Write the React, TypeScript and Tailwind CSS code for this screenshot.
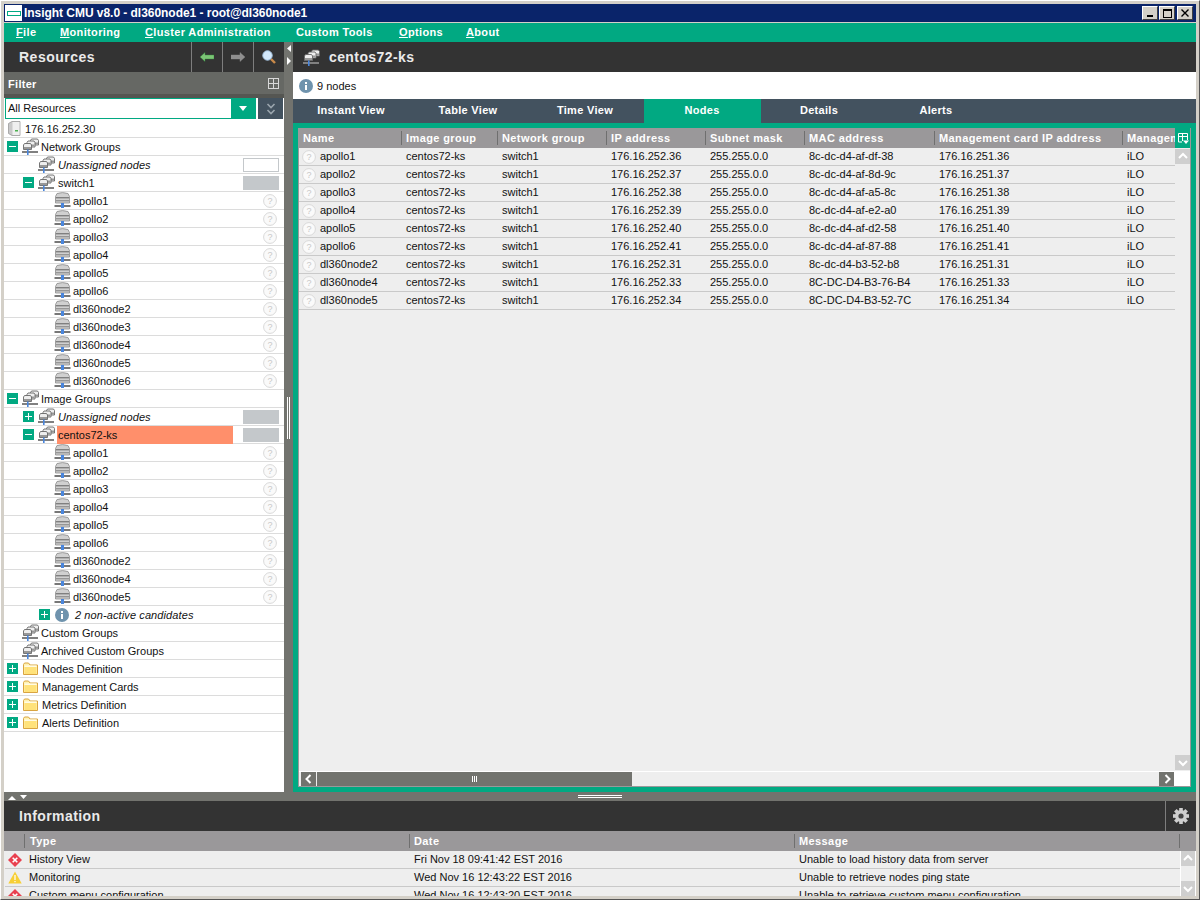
import React from "react";

const font = "font-['Liberation_Sans',Arial,sans-serif]";

function Stack({ x, y }: { x: number; y: number }) {
  return (
    <g transform={`translate(${x} ${y})`}>
      <path d="M1.5 0.5 H7.5 L8.5 2 V6.5 H0.5 V2 Z" fill="#eeeeee" stroke="#666" strokeWidth="0.9" />
      <rect x="1" y="4" width="7" height="2" fill="#989898" />
    </g>
  );
}

function NetIcon() {
  return (
    <svg width="17" height="17" viewBox="0 0 17 17" className="shrink-0">
      <Stack x={8} y={0.5} />
      <Stack x={4.5} y={2.5} />
      <Stack x={1} y={5} />
      <rect x="0" y="13" width="16" height="2" fill="#808080" />
      <rect x="5" y="11.5" width="1.6" height="5.5" fill="#4a86dc" />
    </svg>
  );
}

function NodeIcon() {
  return (
    <svg width="17" height="17" viewBox="0 0 17 17" className="shrink-0">
      <path d="M3 1.5 Q8.5 -0.3 14 1.5 L15.5 4.5 V11 H1.5 V4.5 Z" fill="#d0d0d0" stroke="#8a8a8a" strokeWidth="0.8" />
      <rect x="2" y="5" width="13" height="1.4" fill="#808080" />
      <rect x="2" y="8" width="13" height="1.4" fill="#969696" />
      <rect x="0.5" y="13" width="16" height="2" fill="#777" />
      <rect x="7" y="11" width="3" height="5" fill="#4a86dc" />
    </svg>
  );
}

function Help({ className = "" }: { className?: string }) {
  return (
    <svg width="14" height="14" viewBox="0 0 14 14" className={"shrink-0 " + className}>
      <circle cx="7" cy="7" r="6.4" fill="#fafafa" stroke="#d9d9d9" strokeWidth="1" />
      <text x="7" y="10.2" textAnchor="middle" fontSize="9" fill="#c8c8c8" fontFamily="Liberation Sans">?</text>
    </svg>
  );
}

function InfoDot() {
  return (
    <svg width="14" height="14" viewBox="0 0 14 14" className="shrink-0">
      <circle cx="7" cy="7" r="7" fill="#6f93ad" />
      <rect x="6" y="3" width="2" height="2" fill="#fff" />
      <rect x="6" y="6" width="2" height="5" fill="#fff" />
    </svg>
  );
}

function Expander({ open }: { open: boolean }) {
  return (
    <span className="relative block h-[11px] w-[11px] shrink-0 bg-[#01a982]">
      <span className="absolute left-[2px] top-[5px] h-px w-[7px] bg-white" />
      {!open && <span className="absolute left-[5px] top-[2px] h-[7px] w-px bg-white" />}
    </span>
  );
}

function Folder() {
  return (
    <svg width="15" height="13" viewBox="0 0 15 13" className="shrink-0">
      <path d="M0.5 2.5 V12.5 H14.5 V3 H7 L5.5 1 H1.5 Z" fill="#fff2b0" stroke="#d9a441" strokeWidth="1" />
      <rect x="1.5" y="5" width="12" height="7" fill="#ffe27a" />
      <rect x="1.5" y="3.5" width="12" height="1.5" fill="#fffbe6" />
    </svg>
  );
}

type Tree = {
  label: string;
  level: 0 | 1 | 2;
  exp?: "open" | "closed";
  icon: "net" | "node" | "folder" | "info";
  italic?: boolean;
  swatch?: "white" | "gray";
  help?: boolean;
  selected?: boolean;
};

const n = (label: string): Tree => ({ label, level: 2, icon: "node", help: true });

const tree: Tree[] = [
  { label: "Network Groups", level: 0, exp: "open", icon: "net" },
  { label: "Unassigned nodes", level: 1, icon: "net", italic: true, swatch: "white" },
  { label: "switch1", level: 1, exp: "open", icon: "net", swatch: "gray" },
  ...["apollo1", "apollo2", "apollo3", "apollo4", "apollo5", "apollo6", "dl360node2", "dl360node3", "dl360node4", "dl360node5", "dl360node6"].map(n),
  { label: "Image Groups", level: 0, exp: "open", icon: "net" },
  { label: "Unassigned nodes", level: 1, exp: "closed", icon: "net", italic: true, swatch: "gray" },
  { label: "centos72-ks", level: 1, exp: "open", icon: "net", swatch: "gray", selected: true },
  ...["apollo1", "apollo2", "apollo3", "apollo4", "apollo5", "apollo6", "dl360node2", "dl360node4", "dl360node5"].map(n),
  { label: "2 non-active candidates", level: 2, exp: "closed", icon: "info", italic: true },
  { label: "Custom Groups", level: 0, icon: "net" },
  { label: "Archived Custom Groups", level: 0, icon: "net" },
  { label: "Nodes Definition", level: 0, exp: "closed", icon: "folder" },
  { label: "Management Cards", level: 0, exp: "closed", icon: "folder" },
  { label: "Metrics Definition", level: 0, exp: "closed", icon: "folder" },
  { label: "Alerts Definition", level: 0, exp: "closed", icon: "folder" },
];

function TreeRow({ r }: { r: Tree }) {
  const slot =
    r.level === 0 ? "w-[18px] pl-[3px]" : r.level === 1 ? "w-[34px] pl-[19px]" : r.icon === "info" ? "w-[50px] pl-[35px]" : "w-[50px]";
  return (
    <div className="flex h-[18px] shrink-0 items-center border-b border-[#dcdcdc] text-[11px] text-[#111]">
      <span className={"flex shrink-0 items-center " + slot}>{r.exp && <Expander open={r.exp === "open"} />}</span>
      {r.icon === "net" && <NetIcon />}
      {r.icon === "node" && <NodeIcon />}
      {r.icon === "folder" && <span className="mr-[2px] ml-[1px] block"><Folder /></span>}
      {r.icon === "info" && <span className="mr-[4px] ml-[1px] block"><InfoDot /></span>}
      <span
        className={
          "ml-[2px] flex h-[18px] items-center pt-[2px] whitespace-nowrap " +
          (r.level === 1 ? "pl-px " : "") +
          (r.selected ? "w-[176px] bg-[#ff8f6b] " : "") +
          (r.italic ? "italic tracking-[0.1px]" : "")
        }
      >
        {r.label}
      </span>
      <span className="flex-1" />
      {r.swatch === "white" && <span className="mr-[5px] h-[14px] w-[36px] shrink-0 border border-[#c4c8cb] bg-white" />}
      {r.swatch === "gray" && <span className="mr-[5px] h-[14px] w-[36px] shrink-0 bg-[#c4c8cb]" />}
      {r.help && <Help className="mr-[7px]" />}
    </div>
  );
}

const cols = ["Name", "Image group", "Network group", "IP address", "Subnet mask", "MAC address", "Management card IP address", "Management"];
const rows = [
  ["apollo1", "176.16.252.36", "8c-dc-d4-af-df-38", "176.16.251.36"],
  ["apollo2", "176.16.252.37", "8c-dc-d4-af-8d-9c", "176.16.251.37"],
  ["apollo3", "176.16.252.38", "8c-dc-d4-af-a5-8c", "176.16.251.38"],
  ["apollo4", "176.16.252.39", "8c-dc-d4-af-e2-a0", "176.16.251.39"],
  ["apollo5", "176.16.252.40", "8c-dc-d4-af-d2-58", "176.16.251.40"],
  ["apollo6", "176.16.252.41", "8c-dc-d4-af-87-88", "176.16.251.41"],
  ["dl360node2", "176.16.252.31", "8c-dc-d4-b3-52-b8", "176.16.251.31"],
  ["dl360node4", "176.16.252.33", "8C-DC-D4-B3-76-B4", "176.16.251.33"],
  ["dl360node5", "176.16.252.34", "8C-DC-D4-B3-52-7C", "176.16.251.34"],
];
const gridCols = "grid grid-cols-[103px_96px_109px_99px_99px_130px_188px_53px]";

function Chevron({ dir, color = "#fff" }: { dir: "up" | "down" | "left" | "right"; color?: string }) {
  const d = {
    up: "M2 7 L6 3 L10 7",
    down: "M2 4 L6 8 L10 4",
    left: "M7.5 2 L3.5 6 L7.5 10",
    right: "M4.5 2 L8.5 6 L4.5 10",
  }[dir];
  return (
    <svg width="12" height="12" viewBox="0 0 12 12">
      <path d={d} fill="none" stroke={color} strokeWidth="2" />
    </svg>
  );
}

const menu: [string, string][] = [
  ["F", "ile"],
  ["M", "onitoring"],
  ["C", "luster Administration"],
  ["", "Custom Tools"],
  ["O", "ptions"],
  ["A", "bout"],
];

function WinBtn({ children }: { children: React.ReactNode }) {
  return (
    <span className="flex h-[14px] w-[16px] items-center justify-center border-t border-l border-t-white border-l-white border-r border-b border-r-[#404040] border-b-[#404040] bg-[#d4d0c8]">
      {children}
    </span>
  );
}

function Separator() {
  return <span className="h-[30px] w-px shrink-0 bg-[#7e7e7e]" />;
}

function Arrow({ color, dark }: { color: string; dark: string }) {
  return (
    <svg width="14" height="10" viewBox="0 0 14 10">
      <path d="M0 5 L5 0.5 V3 H14 V7 H5 V9.5 Z" fill={color} stroke={dark} strokeWidth="0.4" />
    </svg>
  );
}

const logs = [
  ["err", "History View", "Fri Nov 18 09:41:42 EST 2016", "Unable to load history data from server"],
  ["warn", "Monitoring", "Wed Nov 16 12:43:22 EST 2016", "Unable to retrieve nodes ping state"],
  ["err", "Custom menu configuration", "Wed Nov 16 12:43:20 EST 2016", "Unable to retrieve custom menu configuration"],
];

function ErrIcon() {
  return (
    <svg width="14" height="14" viewBox="0 0 14 14">
      <path d="M7 0 L14 7 L7 14 L0 7 Z" fill="#e9404f" />
      <path d="M4.7 4.7 L9.3 9.3 M9.3 4.7 L4.7 9.3" stroke="#fff" strokeWidth="1.6" />
    </svg>
  );
}

function WarnIcon() {
  return (
    <svg width="14" height="13" viewBox="0 0 14 13">
      <path d="M7 0.5 L13.7 12.5 H0.3 Z" fill="#f7cf35" />
      <rect x="6.4" y="4" width="1.2" height="5" fill="#fff" />
      <rect x="6.4" y="10" width="1.2" height="1.2" fill="#fff" />
    </svg>
  );
}

export default function App() {
  return (
    <div className={"flex h-[900px] w-[1200px] flex-col overflow-hidden border-t border-r border-b border-l border-t-white border-l-white border-r-[#555] border-b-[#555] bg-[#d4d0c8] pt-[3px] pr-[3px] pb-[3px] pl-[3px] " + font}>
      {/* title */}
      <div className="flex h-[18px] shrink-0 items-center bg-[#0a246a] pl-[1px] text-[12px] font-bold tracking-[-0.04px] text-white">
        <span className="mr-[2px] flex h-[16px] w-[17px] items-center justify-center bg-white">
          <span className="block h-[5px] w-[14px] border border-[#01a982]" />
        </span>
        <span>Insight CMU v8.0 - dl360node1 - root@dl360node1</span>
        <span className="flex-1" />
        <span className="mr-[3px] flex items-center">
          <WinBtn><span className="mt-[6px] h-[2px] w-[6px] bg-black" /></WinBtn>
          <span className="w-px" />
          <WinBtn><span className="h-[9px] w-[9px] border border-t-2 border-black" /></WinBtn>
          <span className="w-[2px]" />
          <WinBtn>
            <svg width="8" height="8" viewBox="0 0 8 8"><path d="M0.5 0.5 L7.5 7.5 M7.5 0.5 L0.5 7.5" stroke="#000" strokeWidth="1.4" /></svg>
          </WinBtn>
        </span>
      </div>
      {/* menu */}
      <div className="mt-px flex h-[19px] shrink-0 items-center bg-[#01a982] pl-[12px] text-[11px] font-bold tracking-[0.35px] text-white">
        {menu.map(([u, t], i) => (
          <span key={t} className={["w-[44px]", "w-[85px]", "w-[151px]", "w-[103px]", "w-[67px]", "w-[40px]"][i] + " whitespace-nowrap"}>
            {u && <span className="underline">{u}</span>}
            {t}
          </span>
        ))}
      </div>

      {/* main */}
      <div className="flex h-[750px] shrink-0">
        {/* left */}
        <div className="flex w-[280px] shrink-0 flex-col bg-white">
          <div className="flex h-[30px] shrink-0 items-center bg-[#333333]">
            <span className="w-[187px] pl-[15px] text-[14px] font-bold tracking-[0.5px] text-[#eaeaea]">Resources</span>
            <Separator />
            <span className="flex w-[30px] items-center justify-center"><Arrow color="#7cc576" dark="#2f8a3a" /></span>
            <Separator />
            <span className="flex w-[30px] -scale-x-100 items-center justify-center"><Arrow color="#8f8f8f" dark="#8f8f8f" /></span>
            <Separator />
            <span className="flex flex-1 items-center justify-center">
              <svg width="14" height="14" viewBox="0 0 14 14">
                <path d="M9 9 L13 13" stroke="#c98a4a" strokeWidth="2.4" />
                <circle cx="5.5" cy="5.5" r="4.7" fill="#d3e8fb" stroke="#a9c8e6" strokeWidth="1" />
              </svg>
            </span>
          </div>
          <div className="flex h-[22px] shrink-0 items-center justify-between bg-[#666864] pt-px pr-[5px] pl-[4px] text-[11px] font-bold tracking-[0.3px] text-white">
            <span className="pt-px">Filter</span>
            <span className="relative block h-[11px] w-[11px] border border-[#d8d8d8]">
              <span className="absolute top-[4px] left-0 h-px w-[9px] bg-[#d8d8d8]" />
              <span className="absolute top-0 left-[4px] h-[9px] w-px bg-[#d8d8d8]" />
            </span>
          </div>
          <div className="h-[4px] shrink-0 bg-[#555652]" />
          <div className="flex h-[22px] shrink-0 items-stretch pr-[1px] pb-px pl-px">
            <div className="flex w-[251px] items-stretch border border-[#01a982] bg-white text-[11px] text-[#111]">
              <span className="flex flex-1 items-center pl-[2px]">All Resources</span>
              <span className="flex w-[24px] items-center justify-center bg-[#01a982]">
                <svg width="8" height="5" viewBox="0 0 8 5"><path d="M0 0 H8 L4 5 Z" fill="#fff" /></svg>
              </span>
            </div>
            <span className="ml-[2px] flex w-[25px] items-center justify-center bg-[#43525f]">
              <svg width="10" height="12" viewBox="0 0 10 12">
                <path d="M1.5 1 L5 4.5 L8.5 1 M1.5 7 L5 10.5 L8.5 7" fill="none" stroke="#9aa5ad" strokeWidth="1.6" />
              </svg>
            </span>
          </div>
          <div className="flex h-[18px] shrink-0 items-center border-b border-[#dcdcdc] pl-[4px] text-[11px] text-[#111]">
            <svg width="13" height="15" viewBox="0 0 13 15" className="mr-[4px] shrink-0">
              <path d="M0.5 2.5 L4 0.5 H12 V14.5 H4 L0.5 12.5 Z" fill="#c9c9c9" stroke="#9a9a9a" strokeWidth="0.8" />
              <rect x="4.5" y="1" width="7" height="13" fill="#efefef" />
              <rect x="7" y="9" width="3" height="1.5" fill="#4caf50" />
            </svg>
            <span className="pt-[2px]">176.16.252.30</span>
          </div>
          {tree.map((r, i) => (
            <TreeRow key={i} r={r} />
          ))}
        </div>

        {/* splitter */}
        <div className="flex w-[9px] shrink-0 flex-col items-center bg-[#72736e]">
          <svg width="6" height="20" viewBox="0 0 6 20" className="mt-[3px]">
            <path d="M5 0 V7 L1 3.5 Z M1 12 V20 L5 16 Z" fill="#fff" />
          </svg>
          <span className="mt-[332px] h-[42px] w-[3px] border-x border-white" />
        </div>

        {/* right */}
        <div className="flex min-w-0 flex-1 flex-col">
          <div className="flex h-[30px] shrink-0 items-center bg-[#333333] pl-[10px] text-[14px] font-bold tracking-[0.4px] text-[#eaeaea]">
            <NetIcon />
            <span className="ml-[9px]">centos72-ks</span>
          </div>
          <div className="flex h-[27px] shrink-0 items-center bg-white pl-[6px] text-[11px] text-[#111]">
            <InfoDot />
            <span className="ml-[4px] pt-[2px]">9 nodes</span>
          </div>
          <div className="flex h-[24px] shrink-0 bg-[#43525f] text-[11px] font-bold tracking-[0.3px] text-white">
            {["Instant View", "Table View", "Time View", "Nodes", "Details", "Alerts"].map((t) => (
              <span key={t} className={"flex w-[117px] items-center justify-center pr-px pb-[2px] " + (t === "Nodes" ? "bg-[#01a982]" : "")}>
                {t}
              </span>
            ))}
          </div>
          <div className="flex min-h-0 flex-1 bg-[#01a982] pt-[5px] pr-[5px] pb-[5px] pl-[5px]">
            <div className="flex min-w-0 flex-1 flex-col border-r border-b border-l border-[#9a989a] bg-[#eeeeee]">
              {/* header */}
              <div className="relative h-[20px] shrink-0 overflow-hidden bg-[#9a989a] text-[11px] font-bold tracking-[0.4px] text-white">
                <div className={gridCols + " h-full w-max"}>
                  {cols.map((c, i) => (
                    <span key={c} className="flex items-center overflow-hidden pl-[4px] whitespace-nowrap">
                      <span className="flex-1">{c}</span>
                      {i < 7 && <span className="h-[14px] w-px shrink-0 bg-[#6f6f6f]" />}
                    </span>
                  ))}
                </div>
                <span className="absolute top-0 right-0 flex h-[20px] w-[15px] items-center justify-center bg-[#01a982]">
                  <svg width="12" height="13" viewBox="0 0 12 13">
                    <path d="M1.5 1.5 H10.5 V8 M1.5 1.5 V10 H5 M1.5 4.5 H10.5 M5.5 1.5 V9" fill="none" stroke="#fff" strokeWidth="1" />
                    <path d="M6 8.5 H12 L9 12 Z" fill="#fff" />
                  </svg>
                </span>
              </div>
              {/* body */}
              <div className="flex min-h-0 flex-1">
                <div className="flex min-w-0 flex-1 flex-col overflow-hidden">
                  {rows.map((r) => (
                    <div key={r[0]} className={gridCols + " h-[18px] w-max shrink-0 border-b border-[#c9c9c9] text-[11px] leading-[17px] text-[#111]"}>
                      <span className="flex items-center pl-[3px]">
                        <Help />
                        <span className="ml-[4px]">{r[0]}</span>
                      </span>
                      <span className="pl-[4px]">centos72-ks</span>
                      <span className="pl-[4px]">switch1</span>
                      <span className="pl-[4px]">{r[1]}</span>
                      <span className="pl-[4px]">255.255.0.0</span>
                      <span className="pl-[4px]">{r[2]}</span>
                      <span className="pl-[4px]">{r[3]}</span>
                      <span className="pl-[4px]">iLO</span>
                    </div>
                  ))}
                </div>
                <div className="flex w-[15px] shrink-0 flex-col justify-between py-px">
                  <span className="flex h-[15px] items-center justify-center bg-[#cfcfcf]"><Chevron dir="up" /></span>
                  <span className="flex h-[15px] items-center justify-center bg-[#cfcfcf]"><Chevron dir="down" /></span>
                </div>
              </div>
              {/* h scroll */}
              <div className="flex h-[15px] shrink-0 items-stretch border-t border-white bg-[#eeeeee]">
                <span className="ml-[2px] flex w-[15px] items-center justify-center bg-[#72736e]"><Chevron dir="left" /></span>
                <span className="ml-px flex w-[315px] items-center justify-center gap-px bg-[#72736e]">
                  <span className="h-[6px] w-px bg-white" />
                  <span className="h-[6px] w-px bg-white" />
                  <span className="h-[6px] w-px bg-white" />
                </span>
                <span className="flex-1" />
                <span className="flex w-[15px] items-center justify-center bg-[#72736e]"><Chevron dir="right" /></span>
                <span className="w-[16px] bg-white" />
              </div>
            </div>
          </div>
        </div>
      </div>

      {/* divider */}
      <div className="flex h-[9px] shrink-0 items-center bg-[#72736e] pl-[3px]">
        <svg width="24" height="6" viewBox="0 0 24 6">
          <path d="M1 6 L5 2 L9 6 Z M13 1 H20 L16.5 5 Z" fill="#fff" />
        </svg>
        <span className="ml-[547px] h-[3px] w-[44px] border-y border-white" />
      </div>

      {/* information */}
      <div className="flex h-[30px] shrink-0 items-center bg-[#333333]">
        <span className="flex-1 pl-[15px] text-[14px] font-bold tracking-[0.4px] text-[#eaeaea]">Information</span>
        <span className="h-[30px] w-px bg-[#7e7e7e]" />
        <span className="flex w-[30px] items-center justify-center">
          <svg width="16" height="16" viewBox="0 0 16 16">
            <g fill="#cfcfcf">
              <rect x="6.2" y="0" width="3.6" height="16" />
              <rect x="0" y="6.2" width="16" height="3.6" />
              <rect x="6.2" y="0" width="3.6" height="16" transform="rotate(45 8 8)" />
              <rect x="6.2" y="0" width="3.6" height="16" transform="rotate(-45 8 8)" />
              <circle cx="8" cy="8" r="6" />
            </g>
            <circle cx="8" cy="8" r="2.6" fill="#444" />
          </svg>
        </span>
      </div>
      <div className="flex h-[20px] shrink-0 items-center bg-[#9a989a] text-[11px] font-bold tracking-[0.4px] text-white">
        <span className="flex h-full w-[21px] shrink-0 items-center justify-end"><span className="h-[14px] w-px bg-[#6f6f6f]" /></span>
        <span className="flex h-full w-[385px] shrink-0 items-center pl-[5px]"><span className="flex-1">Type</span><span className="h-[14px] w-px bg-[#6f6f6f]" /></span>
        <span className="flex h-full w-[385px] shrink-0 items-center pl-[4px]"><span className="flex-1">Date</span><span className="h-[14px] w-px bg-[#6f6f6f]" /></span>
        <span className="flex h-full w-[385px] shrink-0 items-center pl-[4px]"><span className="flex-1">Message</span><span className="h-[14px] w-px bg-[#6f6f6f]" /></span>
      </div>
      <div className="flex min-h-0 flex-1 overflow-hidden bg-[#eeeeee]">
        <div className="min-w-0 flex-1 overflow-hidden pl-px">
          {logs.map((l) => (
            <div key={l[1]} className="flex h-[18px] items-center border-b border-[#c9c9c9] text-[11px] text-[#111]">
              <span className="flex w-[24px] shrink-0 items-center pl-[3px]">{l[0] === "err" ? <ErrIcon /> : <WarnIcon />}</span>
              <span className="w-[385px] shrink-0 whitespace-nowrap">{l[1]}</span>
              <span className="w-[385px] shrink-0 whitespace-nowrap">{l[2]}</span>
              <span className="whitespace-nowrap">{l[3]}</span>
            </div>
          ))}
        </div>
        <div className="flex w-[16px] shrink-0 flex-col justify-between border-x border-white">
          <span className="flex h-[15px] items-center justify-center bg-[#cfcfcf]"><Chevron dir="up" /></span>
          <span className="flex h-[15px] items-center justify-center bg-[#cfcfcf]"><Chevron dir="down" /></span>
        </div>
      </div>
    </div>
  );
}
